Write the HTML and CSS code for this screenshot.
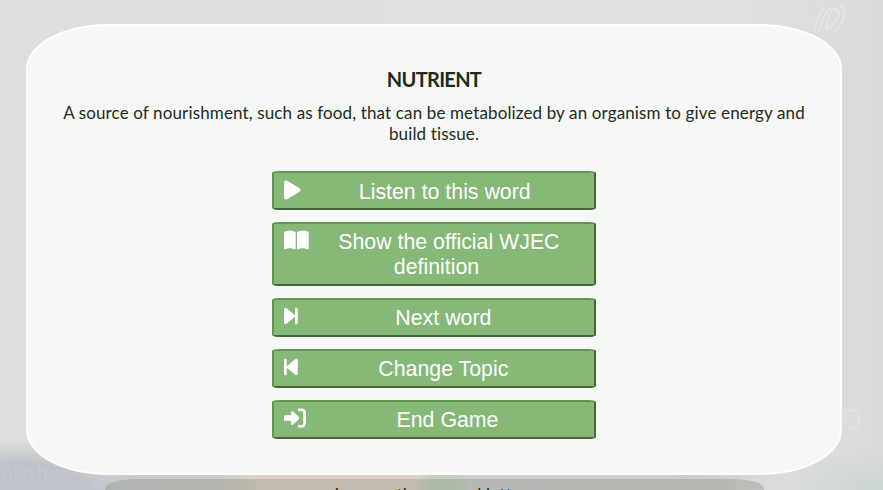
FILE: index.html
```html
<!DOCTYPE html>
<html lang="en">
<head>
<meta charset="utf-8">
<title>Nutrient</title>
<link rel="stylesheet" href="styles.css">
</head>
<body>
<span class="ghost ghost-zero">0</span>
<span class="ghost ghost-splash">plash</span>
<span class="ghost ghost-insp">insp</span>
<svg class="sketch" viewBox="0 0 60 50"><path d="M8 30 Q14 12 18 6M13 32Q17 16 24 8M20 30Q24 4 31 10T20 30M28 32Q44 18 35 4"/></svg>
<div class="letters">Incorrectly guessed letters</div>
<main class="card">
  <h1>NUTRIENT</h1>
  <p><span class="line line-one">A source of nourishment, such as food, that can be metabolized by an organism to give energy and</span> <span class="line line-two">build tissue.</span></p>
  <div class="actions">
    <button><svg class="icon play" viewBox="0 0 384 512"><path d="M73 39c-15-9-33-9-48-1S0 62 0 80v352c0 17 9 34 24 42s34 8 49-1l288-176c14-9 23-24 23-41s-9-32-23-41z"/></svg>Listen to this word</button>
    <button><svg class="icon book" viewBox="0 0 576 512"><path d="M249.600 471.500c10.800 3.800 22.400-4.100 22.400-15.500V78.600c0-4.200-1.600-8.400-5-11C247.400 52 202.400 32 144 32 93.500 32 46.300 45.300 18.100 56.100 6.800 60.500 0 71.700 0 83.800v370.300c0 11.900 12.800 20.200 24.100 16.500C55.600 460.100 105.500 448 144 448c33.900 0 79 14 105.600 23.500zm76.800 0C353 462 398.100 448 432 448c38.500 0 88.400 12.100 119.900 22.600 11.300 3.800 24.100-4.600 24.100-16.500V83.800c0-12.100-6.800-23.300-18.100-27.600C529.700 45.300 482.500 32 432 32c-58.400 0-103.400 20-123 35.600-3.300 2.600-5 6.800-5 11V456c0 11.400 11.700 19.300 22.400 15.500z"/></svg>Show the official WJEC definition</button>
    <button><svg class="icon step" viewBox="0 0 320 512"><path d="M52.500 440.600c-9.500 7.900-22.800 9.700-34.100 4.400S0 428.400 0 416V96c0-12.400 7.200-23.700 18.400-29s24.500-3.600 34.100 4.400L256 241V96c0-17.700 14.300-32 32-32s32 14.300 32 32v320c0 17.700-14.300 32-32 32s-32-14.300-32-32V271z"/></svg>Next word</button>
    <button><svg class="icon step" viewBox="0 0 320 512"><path transform="translate(320) scale(-1 1)" d="M52.500 440.600c-9.500 7.900-22.800 9.700-34.100 4.400S0 428.400 0 416V96c0-12.400 7.200-23.700 18.400-29s24.500-3.600 34.100 4.400L256 241V96c0-17.700 14.300-32 32-32s32 14.300 32 32v320c0 17.700-14.300 32-32 32s-32-14.300-32-32V271z"/></svg>Change Topic</button>
    <button><svg class="icon exit" viewBox="0 0 512 512"><path d="M217.900 105.900 340.700 228.700c7.200 7.200 11.300 17.100 11.300 27.300s-4.100 20.100-11.300 27.300L217.900 406.100c-6.400 6.400-15 9.900-24 9.900-18.700 0-33.900-15.200-33.900-33.900V320H32c-17.700 0-32-14.300-32-32v-64c0-17.700 14.300-32 32-32h128v-62.100c0-18.700 15.200-33.900 33.900-33.900 9 0 17.600 3.600 24 9.900zM352 416h64c17.700 0 32-14.300 32-32V128c0-17.700-14.300-32-32-32h-64c-17.700 0-32-14.300-32-32s14.300-32 32-32h64c53 0 96 43 96 96v256c0 53-43 96-96 96h-64c-17.700 0-32-14.300-32-32s14.300-32 32-32z"/></svg>End Game</button>
  </div>
</main>
</body>
</html>
```
FILE: styles.css
```css
* { box-sizing: border-box; }
body {
  margin: 0;
  height: 490px;
  position: relative;
  overflow: hidden;
  padding: 24px 41px 0 26px;
  color: #1c2b1c;
  font-family: Lato, sans-serif;
  background:
    radial-gradient(ellipse 120px 52px at 20px 492px, #bfc3ca 55%, transparent 100%),
    radial-gradient(ellipse 110px 40px at 883px 488px, #ccd4d4, transparent),
    linear-gradient(90deg, transparent 60px, #cacbce 130px, #cccbc8 215px, #dfd3c8 260px, #dfd3c8 415px, #c4d1c2 430px, #c4d1c2 458px, #d0d1d1 472px, #cccdcc 700px, transparent 790px) 0 475px / 883px 15px no-repeat,
    linear-gradient(90deg, #dddee0, #dedede 30%, #dfe0e0 80%, #dbdada);
}
.ghost { position: absolute; color: #e0e0e0; }
.ghost-zero { left: 844px; top: 401px; font-size: 29px; }
.ghost-splash { left: 2px; top: 459px; font-size: 20px; color: #c6c9ce; }
.ghost-insp { left: 842px; top: 117px; font-size: 16px; color: #dadada; }
.sketch { position: absolute; left: 806px; top: 0; width: 60px; height: 50px; fill: none; stroke: #e3e4e4; stroke-width: 2; }
.letters {
  position: absolute;
  left: 105px;
  top: 479px;
  width: 659px;
  height: 11px;
  overflow: hidden;
  padding-top: 6px;
  border-radius: 33px 33px 0 0 / 9px 9px 0 0;
  background: rgba(110, 115, 100, .26);
  text-align: center;
  font-size: 17px;
  line-height: 20px;
  letter-spacing: .15px;
}
.card {
  position: relative;
  height: 451px;
  padding: 41px 34px 0;
  border: 2px solid #fff;
  border-radius: 10%;
  background: #f6f8f5;
  text-align: center;
}
h1 { margin: 0; font-size: 20px; line-height: 25px; letter-spacing: -.7px; }
p { margin: 10px 0 0; font-size: 17px; line-height: 21px; letter-spacing: .135px; font-variant-ligatures: none; }
.line { display: block; white-space: nowrap; }
.actions { width: 324px; margin: 27px auto 0; display: grid; gap: 12px; }
button {
  display: block;
  width: 100%;
  padding: 6px 5px 4px 10px;
  border: 2px solid;
  border-color: #5c9650 #43663b #43663b #5c9650;
  border-radius: 8px / 2px;
  background: #86b878;
  color: #fff;
  font: 21.333px/25px "Liberation Sans", Arial, sans-serif;
  text-align: center;
}
button:first-child { padding-top: 7px; padding-bottom: 3px; }
.icon { float: left; height: 22px; margin-top: -1px; fill: currentColor; }
.play { width: 16.5px; }
.book { width: 24.75px; }
.step { width: 13.75px; }
.exit { width: 22px; }
```
